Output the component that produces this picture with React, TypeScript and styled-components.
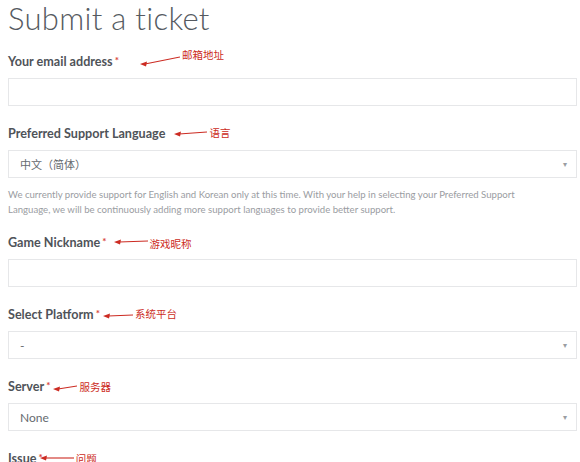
import React from "react";
import styled, {createGlobalStyle} from "styled-components";

const colors = {
  title: "#555a61",
  label: "#4f5359",
  required: "#d9443a",
  note: "#cc2b22",
  border: "#e6e7e9",
  value: "#666a70",
  help: "#9a9da2",
};

type Note = {
  text: string;
  gap: number;
  width: number;
  head: number;
  tail: number;
  dy: number;
};

type FieldDef = {
  label: string;
  required?: boolean;
  kind: "input" | "select";
  value?: string;
  cjk?: boolean;
  note: Note;
  help?: boolean;
};

const fields: FieldDef[] = [
  {
    label: "Your email address",
    required: true,
    kind: "input",
    note: {text: "邮箱地址", gap: 21, width: 40, head: 11, tail: 4, dy: -7},
  },
  {
    label: "Preferred Support Language",
    kind: "select",
    value: "中文（简体）",
    cjk: true,
    note: {text: "语言", gap: 9, width: 33, head: 9, tail: 7, dy: -1},
    help: true,
  },
  {
    label: "Game Nickname",
    required: true,
    kind: "input",
    note: {text: "游戏昵称", gap: 7, width: 34, head: 8, tail: 7, dy: 1},
  },
  {
    label: "Select Platform",
    required: true,
    kind: "select",
    value: "-",
    note: {text: "系统平台", gap: 3, width: 30, head: 10, tail: 9, dy: -1},
  },
  {
    label: "Server",
    required: true,
    kind: "select",
    value: "None",
    note: {text: "服务器", gap: 3, width: 24, head: 11, tail: 8, dy: 0},
  },
  {
    label: "Issue",
    required: true,
    kind: "input",
    note: {text: "问题", gap: -3, width: 34, head: 8, tail: 8, dy: 0},
  },
];

const Arrow = ({note}: {note: Note}) => (
  <ArrowSvg width={note.width} height={16} viewBox={`0 0 ${note.width} 16`}>
    <line
      x1={5}
      y1={note.head}
      x2={note.width}
      y2={note.tail}
      stroke={colors.note}
      strokeWidth={1.1}
    />
    <polygon
      points={`0,${note.head} 7,${note.head - 2.6} 6,${note.head + 2.4}`}
      fill={colors.note}
    />
  </ArrowSvg>
);

const Field = ({field}: {field: FieldDef}) => (
  <FieldWrap>
    <LabelRow>
      <Label>
        {field.label}
        {field.required && <Required>*</Required>}
      </Label>
      <NoteWrap $gap={field.note.gap}>
        <Arrow note={field.note} />
        <NoteText $dy={field.note.dy}>{field.note.text}</NoteText>
      </NoteWrap>
    </LabelRow>
    <Box>
      {field.value && <Value $cjk={field.cjk}>{field.value}</Value>}
      {field.kind === "select" && <Caret>▾</Caret>}
    </Box>
    {field.help && (
      <Help>
        We currently provide support for English and Korean only at this time. With your help in
        selecting your Preferred Support
        <br />
        Language, we will be continuously adding more support languages to provide better support.
      </Help>
    )}
  </FieldWrap>
);

const App = () => (
  <>
    <GlobalStyle />
    <Page>
      <Title>Submit a ticket</Title>
      {fields.map((f) => (
        <Field key={f.label} field={f} />
      ))}
    </Page>
  </>
);

const GlobalStyle = createGlobalStyle`
  html, body {
    margin: 0;
    background: #fff;
  }
  body {
    font-family: Lato, "Noto Sans CJK SC", sans-serif;
    overflow: hidden;
  }
`;

const Page = styled.div`
  width: 580px;
  height: 462px;
  box-sizing: border-box;
  padding: 0 3px 0 8px;
  overflow: hidden;
`;

const Title = styled.h1`
  margin: 0;
  height: 52px;
  font-size: 31px;
  line-height: 37px;
  font-weight: 300;
  color: ${colors.title};
  letter-spacing: 0.3px;
`;

const FieldWrap = styled.div`
  margin-bottom: 18px;
`;

const LabelRow = styled.div`
  display: flex;
  align-items: center;
  height: 18px;
  margin-bottom: 8px;
`;

const Label = styled.span`
  font-size: 12.6px;
  font-weight: 700;
  color: ${colors.label};
`;

const Required = styled.span`
  color: ${colors.required};
  font-size: 10px;
  margin-left: 2px;
  position: relative;
  top: -2px;
`;

const NoteWrap = styled.span<{$gap: number}>`
  display: flex;
  align-items: center;
  margin-left: ${(p) => p.$gap}px;
`;

const ArrowSvg = styled.svg`
  display: block;
  flex: none;
`;

const NoteText = styled.span<{$dy: number}>`
  font-family: "Noto Sans CJK SC", sans-serif;
  font-size: 10.5px;
  color: ${colors.note};
  margin-left: 2px;
  transform: translateY(${(p) => p.$dy}px);
`;

const Box = styled.div`
  display: flex;
  align-items: center;
  justify-content: space-between;
  height: 28px;
  box-sizing: border-box;
  border: 1px solid ${colors.border};
  padding: 0 9px 0 11px;
  background: #fff;
`;

const Value = styled.span<{$cjk?: boolean}>`
  font-size: ${(p) => (p.$cjk ? 11 : 12)}px;
  color: ${colors.value};
`;

const Caret = styled.span`
  margin-left: auto;
  font-size: 8px;
  color: #9a9da2;
`;

const Help = styled.p`
  margin: 9px 0 -2px;
  font-size: 9.6px;
  line-height: 15px;
  color: ${colors.help};
`;

export default App;
